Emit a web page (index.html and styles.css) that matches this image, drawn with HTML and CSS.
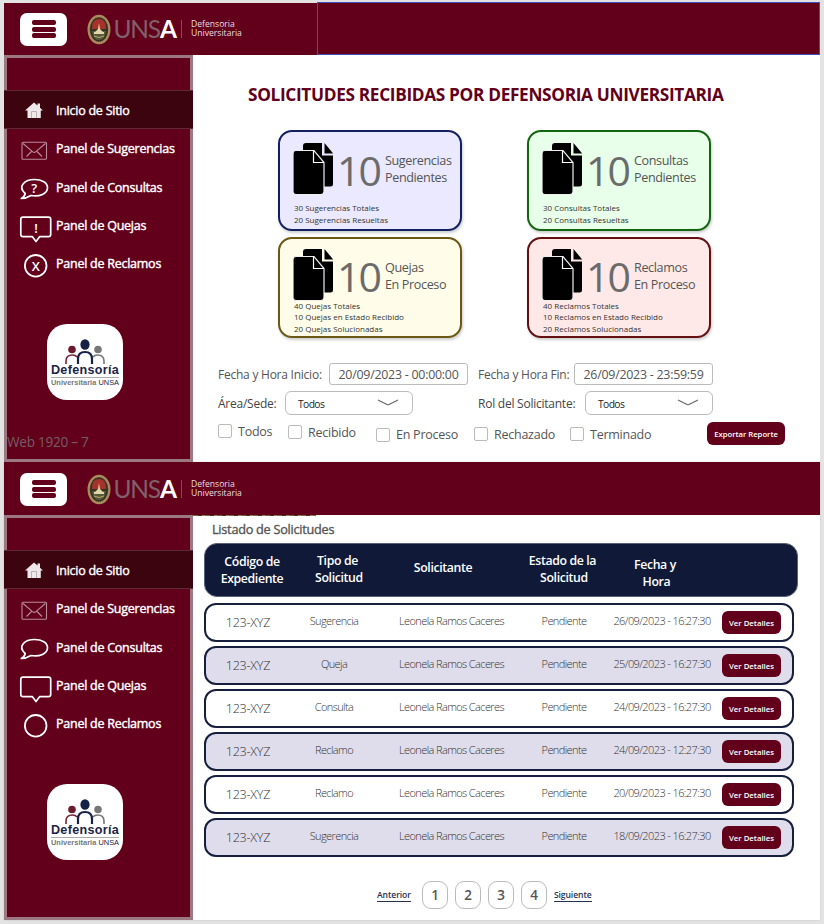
FILE: index.html
```html
<!DOCTYPE html>
<html lang="es">
<head>
<meta charset="utf-8">
<title>Defensoría Universitaria UNSA</title>
<link rel="stylesheet" href="styles.css">
</head>
<body>
<svg class="defs" width="0" height="0">
  <symbol id="home" viewBox="0 0 36 38"><path fill="#eee8ea" d="M16 11.500 19.500 14.500v-2h2.500v4.200L25 19.500h-2.200V27H9.500v-7.500H7z"/><path d="M13.500 27v-6.500h5V27" fill="none" stroke="#aaa1a4" stroke-width=".8"/></symbol>
  <symbol id="mail" viewBox="0 0 36 38"><g fill="none" stroke="#b78c99" stroke-width="1.100"><rect x="4" y="12.300" width="24.500" height="17" rx="1"/><path d="m5 13.500 9.500 8.200q1.700 1.400 3.400 0l9.500-8.200M8.500 26.500l5-5M24 26.500l-5-5"/></g></symbol>
  <symbol id="chat" viewBox="0 0 36 38"><path fill="none" stroke="#fff" stroke-width="1.700" stroke-linejoin="round" d="M7.200 25.500C-1 18 7 11.500 16.500 11.500c7.500 0 13 3.400 13 8.200 0 5.800-8 9.500-16.500 7.800-3 1.800-7 3-9.700 3 2.200-1.200 3.500-2.800 3.900-5z"/></symbol>
  <symbol id="note" viewBox="0 0 36 38"><path fill="none" stroke="#fff" stroke-width="1.700" stroke-linejoin="round" d="M5 11.200h25.500q2.200 0 2.200 2.200v15q0 2.200-2.200 2.200h-8.700L18 35.500l-3.800-4.900H5q-2.200 0-2.200-2.200v-15q0-2.200 2.200-2.200z"/></symbol>
  <symbol id="ring" viewBox="0 0 36 38"><circle cx="17.700" cy="20.800" r="10.800" fill="none" stroke="#fff" stroke-width="1.800"/></symbol>
  <symbol id="docs" viewBox="0 0 42 52"><path d="M13 0h16v12.500h11V41q0 2.500-2.500 2.500H10V3q0-3 3-3z"/><path d="m31.500 0 8.700 10.500h-8.700z"/><path stroke="#eee" stroke-width="1.200" d="M3 7.500h18l10 12v29q0 3-3 3H3q-3 0-3-3v-38q0-3 3-3z"/><path fill="none" stroke="#fff" stroke-width="1.200" d="M20.500 7.500v12h10.500"/></symbol>
  <symbol id="seal" viewBox="0 0 24 31"><ellipse cx="12" cy="15.500" rx="11.500" ry="14.800" fill="#a78b5c"/><ellipse cx="12" cy="15.500" rx="9.400" ry="12.400" fill="#393224" stroke="#d2b27b" stroke-width=".6" stroke-dasharray="1 1"/><path d="M5 14q0-9 7-9t7 9v1H5z" fill="#a5332b"/><path d="M5 17h14q-1 9-7 9t-7-9z" fill="#545a3a"/><path d="m12 9 1 6 3 3H8l3-3zM7 18h10v2H7z" fill="#e2d6a8"/><path d="M7 22q5 3 10 0" fill="none" stroke="#b8a96a"/></symbol>
  <symbol id="people" viewBox="0 0 76 32"><circle cx="25" cy="10.500" r="3.800" fill="#6d1a2d"/><circle cx="51" cy="10.500" r="3.800" fill="#777"/><ellipse cx="38" cy="5.500" rx="4.600" ry="5.300" fill="#152146"/><g fill="none"><path d="M19 25v-3q0-6 6.500-6 3 0 4.500 2" stroke="#7a2438" stroke-width="1.600"/><path d="M57 25v-3q0-6-6.500-6-3 0-4.500 2" stroke="#777" stroke-width="1.600"/><path d="M31 25v-5q0-7 7-7t7 7v5" stroke="#152146" stroke-width="2.200"/></g></symbol>
  <symbol id="chevron" viewBox="0 0 22 8"><path d="m1 1 9 4.500q1 .5 2 0L21 1" fill="none" stroke="#666" stroke-width="1.200"/></symbol>
</svg>

<section class="frame first">
  <header class="topbar">
    <button class="burger"><i></i><i></i><i></i></button>
    <svg class="seal"><use href="#seal"/></svg>
    <span class="unsa">UNS<b>A</b></span>
    <span class="unit">Defensoria<br>Universitaria</span>
    <div class="selection"></div>
  </header>
  <nav class="side">
    <a class="item active"><svg><use href="#home"/></svg>Inicio de Sitio</a>
    <a class="item"><svg><use href="#mail"/></svg>Panel de Sugerencias</a>
    <a class="item"><svg><use href="#chat"/><text x="16" y="24.500">?</text></svg>Panel de Consultas</a>
    <a class="item"><svg><use href="#note"/><text x="18" y="26.500">!</text></svg>Panel de Quejas</a>
    <a class="item"><svg><use href="#ring"/><text x="17.700" y="25.500">X</text></svg>Panel de Reclamos</a>
    <div class="logo"><svg><use href="#people"/></svg><strong>Defensoría</strong><small>Universitaria <em>UNSA</em></small></div>
    <span class="artboard">Web 1920 – 7</span>
  </nav>
  <main class="summary">
    <h1>SOLICITUDES RECIBIDAS POR DEFENSORIA UNIVERSITARIA</h1>
    <div class="cards">
      <article class="card blue"><div class="lead"><svg><use href="#docs"/></svg><span class="num">10</span><span class="what">Sugerencias<br>Pendientes</span></div><p>30 Sugerencias Totales<br>20 Sugerencias Resueltas</p></article>
      <article class="card green"><div class="lead"><svg><use href="#docs"/></svg><span class="num">10</span><span class="what">Consultas<br>Pendientes</span></div><p>30 Consultas Totales<br>20 Consultas Resueltas</p></article>
      <article class="card yellow"><div class="lead"><svg><use href="#docs"/></svg><span class="num">10</span><span class="what">Quejas<br>En Proceso</span></div><p>40 Quejas Totales<br>10 Quejas en Estado Recibido<br>20 Quejas Solucionadas</p></article>
      <article class="card red"><div class="lead"><svg><use href="#docs"/></svg><span class="num">10</span><span class="what">Reclamos<br>En Proceso</span></div><p>40 Reclamos Totales<br>10 Reclamos en Estado Recibido<br>20 Reclamos Solucionadas</p></article>
    </div>
    <div class="filters dates">
      <label>Fecha y Hora Inicio:</label><span class="date">20/09/2023 - 00:00:00</span>
      <label>Fecha y Hora Fin:</label><span class="date">26/09/2023 - 23:59:59</span>
    </div>
    <div class="filters selects">
      <label>Área/Sede:</label><span class="select">Todos<svg><use href="#chevron"/></svg></span>
      <label>Rol del Solicitante:</label><span class="select">Todos<svg><use href="#chevron"/></svg></span>
    </div>
    <div class="checks">
      <label class="high"><i></i>Todos</label><label class="mid"><i></i>Recibido</label><label><i></i>En Proceso</label><label class="lift"><i></i>Rechazado</label><label class="lift"><i></i>Terminado</label>
      <button class="btn export">Exportar Reporte</button>
    </div>
  </main>
</section>

<section class="frame second">
  <header class="topbar">
    <button class="burger"><i></i><i></i><i></i></button>
    <svg class="seal"><use href="#seal"/></svg>
    <span class="unsa">UNS<b>A</b></span>
    <span class="unit">Defensoria<br>Universitaria</span>
  </header>
  <nav class="side">
    <a class="item active"><svg><use href="#home"/></svg>Inicio de Sitio</a>
    <a class="item"><svg><use href="#mail"/></svg>Panel de Sugerencias</a>
    <a class="item"><svg><use href="#chat"/></svg>Panel de Consultas</a>
    <a class="item"><svg><use href="#note"/></svg>Panel de Quejas</a>
    <a class="item"><svg><use href="#ring"/></svg>Panel de Reclamos</a>
    <div class="logo"><svg><use href="#people"/></svg><strong>Defensoría</strong><small>Universitaria <em>UNSA</em></small></div>
  </nav>
  <main class="listing">
    <h2>Listado de Solicitudes</h2>
    <div class="thead"><span>Código de<br>Expediente</span><span>Tipo de<br>&nbsp;Solicitud</span><span>Solicitante</span><span>Estado de la<br>&nbsp;Solicitud</span><span class="low">Fecha y<br>&nbsp;Hora</span></div>
    <div class="row"><b>123-XYZ</b><span>Sugerencia</span><span>Leonela Ramos Caceres</span><span>Pendiente</span><span>26/09/2023 - 16:27:30</span><button class="btn">Ver Detalles</button></div>
    <div class="row alt"><b>123-XYZ</b><span>Queja</span><span>Leonela Ramos Caceres</span><span>Pendiente</span><span>25/09/2023 - 16:27:30</span><button class="btn">Ver Detalles</button></div>
    <div class="row"><b>123-XYZ</b><span>Consulta</span><span>Leonela Ramos Caceres</span><span>Pendiente</span><span>24/09/2023 - 16:27:30</span><button class="btn">Ver Detalles</button></div>
    <div class="row alt"><b>123-XYZ</b><span>Reclamo</span><span>Leonela Ramos Caceres</span><span>Pendiente</span><span>24/09/2023 - 12:27:30</span><button class="btn">Ver Detalles</button></div>
    <div class="row"><b>123-XYZ</b><span>Reclamo</span><span>Leonela Ramos Caceres</span><span>Pendiente</span><span>20/09/2023 - 16:27:30</span><button class="btn">Ver Detalles</button></div>
    <div class="row alt"><b>123-XYZ</b><span>Sugerencia</span><span>Leonela Ramos Caceres</span><span>Pendiente</span><span>18/09/2023 - 16:27:30</span><button class="btn">Ver Detalles</button></div>
    <div class="pager"><a class="prev">Anterior</a><span>1</span><span>2</span><span>3</span><span>4</span><a class="next">Siguiente</a></div>
  </main>
</section>
</body>
</html>
```
FILE: styles.css
```css
* { box-sizing: border-box; margin: 0; padding: 0; letter-spacing: -.02em; }
body { width: 824px; height: 924px; padding: 3px 4px; overflow: hidden; background: #e3e3e3; font-family: "Open Sans", "Noto Sans", sans-serif; }
.defs { display: block; position: absolute; }
button { border: 0; font-family: inherit; }

.frame { display: grid; grid-template-columns: 189px 627px; background: #fff; }
.first { grid-template-rows: 52px 407px; }
.second { grid-template-rows: 53px 405px; box-shadow: 0 0 1px #aaa; }
.topbar { grid-column: 1 / 3; display: flex; align-items: center; padding-left: 16px; background: #62001b; }
.second .topbar { padding-top: 1px; }
.burger { width: 47px; height: 33px; border-radius: 7px; background: #fff; display: flex; flex-direction: column; align-items: center; justify-content: center; gap: 1.500px; }
.burger i { width: 24px; height: 5px; border-radius: 2px; background: #62001b; }
.seal { width: 24px; height: 31px; margin-left: 19.500px; }
.unsa { width: 67.500px; margin-left: 3px; font: 400 24.500px/26px Lato, sans-serif; letter-spacing: -1.200px; color: #80616a; white-space: nowrap; flex: none; }
.unsa b { color: #fff; font-weight: 700; letter-spacing: 0; }
.unit { padding-left: 9px; border-left: 1px solid #8c4559; font-size: 8.600px; line-height: 9.300px; color: #eadfe2; letter-spacing: 0; }
.selection { width: 503px; height: 53px; margin: -1px 0 0 auto; border: 1px solid #3f51b8; flex: none; }

.side { background: #62001b; border: 3px solid #9b7882; padding-top: 32px; display: flex; flex-direction: column; }
.item { display: flex; align-items: center; height: 38.400px; padding-left: 11px; font-size: 12.500px; font-weight: 500; color: #fff; white-space: nowrap; -webkit-text-stroke: .4px #fff; }
.item svg { width: 36px; height: 38px; margin-right: 2px; flex: none; }
.item text { fill: #fff; font-size: 13px; font-weight: 600; text-anchor: middle; stroke: none; }
.active { height: 39px; margin: 0 -3px .500px; padding: 1px 0 0 14px; background: #3b040f; border: solid #5d2a36; border-width: 1px 0; flex: none; }
.logo { width: 76px; height: 76px; margin: 40.500px 0 0 40px; border-radius: 20px; background: #fff; display: flex; flex-direction: column; align-items: center; padding-top: 15px; color: #1b2548; }
.logo svg { width: 76px; height: 32px; flex: none; }
.logo strong { font: 700 12.600px/13px "Liberation Sans", sans-serif; margin-top: -7px; letter-spacing: .3px; border-bottom: 1px solid #aaa; }
.logo small { font: 700 7.400px/9px "Liberation Sans", sans-serif; color: #777; letter-spacing: .05px; white-space: nowrap; }
.logo em { font-style: normal; font-weight: 400; color: #1b2548; letter-spacing: 0; }
.artboard { margin-top: 32px; font-size: 13.600px; line-height: 20px; color: #765d65; white-space: nowrap; }

h1 { margin: 28px 0 0 55px; font-size: 17.280px; line-height: 23px; font-weight: 700; color: #62001b; white-space: nowrap; }
.cards { display: grid; grid-template-columns: 184px 184px; grid-auto-rows: 101px; gap: 6px 65px; margin: 24px 0 0 85px; }
.card { border: 2px solid; border-radius: 14px; padding: 11px 0 0 13px; box-shadow: 1px 2px 3px #0003; }
.blue { background: #eae9ff; border-color: #13205f; }
.green { background: #e8ffe9; border-color: #12650f; }
.yellow { background: #fffde9; border-color: #6b5813; }
.red { background: #ffe9e8; border-color: #640f12; }
.lead { display: flex; height: 52px; align-items: center; }
.lead svg { width: 42px; height: 52px; flex: none; }
.num { width: 50px; padding-left: 2px; font-size: 41px; line-height: 42px; letter-spacing: -2px; color: #6b6b6b; margin-top: 1px; flex: none; }
.yellow .num, .red .num { margin-top: 0; }
.yellow .lead svg, .red .lead svg { margin-top: -2px; }
.what { font-size: 12.600px; line-height: 17px; color: #555; margin-top: -1px; white-space: nowrap; letter-spacing: -.03em; }
.card p { padding-left: 1px; font-size: 8px; line-height: 11.800px; font-weight: 500; color: #333; margin-top: 7px; white-space: nowrap; letter-spacing: 0; }
.yellow p, .red p { margin-top: -2px; line-height: 11.400px; }
.filters { display: grid; align-items: center; margin-left: 25px; font-size: 12px; color: #555; white-space: nowrap; }
.dates { grid-template-columns: 111px 139px 10px 96px 139px; height: 22px; margin-top: 25px; }
.dates label:nth-of-type(2), .selects label:nth-of-type(2) { grid-column: 4; }
.date { height: 22px; border: 1px solid #bbb; border-radius: 3px; text-align: center; line-height: 21px; font-size: 12.400px; }
.selects { grid-template-columns: 67px 128px 65px 107px 128px; height: 24px; margin-top: 6px; color: #444; }
.select { height: 24px; border: 1px solid #bbb; border-radius: 6px; display: flex; align-items: center; justify-content: space-between; padding: 1px 13px 0 12px; font-size: 10.300px; color: #222; letter-spacing: -.06em; }
.select svg { width: 22px; height: 8px; margin-top: -1px; }
.checks { display: grid; grid-template-columns: 70px 88px 98px 96px 137px 78px; margin: 4px 0 0 25px; height: 26px; align-items: end; font-size: 12.500px; color: #555; font-weight: 500; }
.checks label { display: flex; align-items: center; gap: 6px; height: 20px; white-space: nowrap; padding-bottom: 1px; }
.checks .high { padding-bottom: 5px; height: 23px; }
.checks .mid { padding-bottom: 4px; height: 22px; }
.checks .lift { padding-bottom: 2px; }
.checks i { width: 14px; height: 14px; border: 1px solid #bbb; border-radius: 2px; }
.btn { width: 59px; height: 23px; border-radius: 6px; background: #62001b; color: #fff; font-size: 7.800px; line-height: 24px; font-weight: 600; white-space: nowrap; letter-spacing: 0; }
.checks .export { width: 78px; align-self: start; margin-top: 3px; font-size: 7.700px; }

.listing { display: flex; flex-direction: column; padding-left: 11px; }
.listing::before { content: ""; width: 123px; height: 1px; margin-left: -11px; background: repeating-linear-gradient(90deg, #76663f 0 5px, #4a2a20 5px 9px, #99875f 9px 12px); }
h2 { margin: 5px 0 5px 8px; font-size: 12.700px; line-height: 17px; font-weight: 500; color: #555; -webkit-text-stroke: .35px #555; }
.thead { width: 594px; height: 54px; border: 1px solid #596078; border-radius: 13px; background: #101a38; margin-bottom: 6px; display: grid; grid-template-columns: 94px 77px 134px 105px 80px; align-items: center; color: #fff; text-align: center; font-size: 12.300px; line-height: 17px; font-weight: 600; white-space: nowrap; }
.thead span { padding-bottom: 2px; letter-spacing: -.03em; }
.thead .low { padding: 5px 0 0; }
.thead span:nth-child(3) { padding-bottom: 5px; }
.thead span:first-child { padding: 0; }
.row { width: 590px; height: 39px; margin-bottom: 4px; border: 2px solid #161f3e; border-radius: 12px; display: grid; grid-template-columns: 84px 88px 147px 78px 118px 59px; align-items: center; text-align: center; font-size: 11px; font-weight: 300; color: #333; white-space: nowrap; }
.row span { padding-bottom: 4px; letter-spacing: -.055em; }
.row b { font-size: 12.600px; font-weight: 300; }
.row .btn { margin-left: 1px; }
.alt { background: #dfddeb; }
.pager { display: flex; align-items: center; gap: 7px; margin: 20px 0 0 173px; }
.pager span { width: 26px; height: 28px; border: 1px solid #bbb; border-radius: 9px; text-align: center; font-size: 13.500px; line-height: 26px; font-weight: 600; color: #555; }
.pager a { font-size: 8.600px; line-height: 11px; font-weight: 600; color: #26304f; border-bottom: 1.500px solid #26304f; margin-top: 2px; letter-spacing: -.01em; }
.pager .prev { margin-right: 4px; }
```
